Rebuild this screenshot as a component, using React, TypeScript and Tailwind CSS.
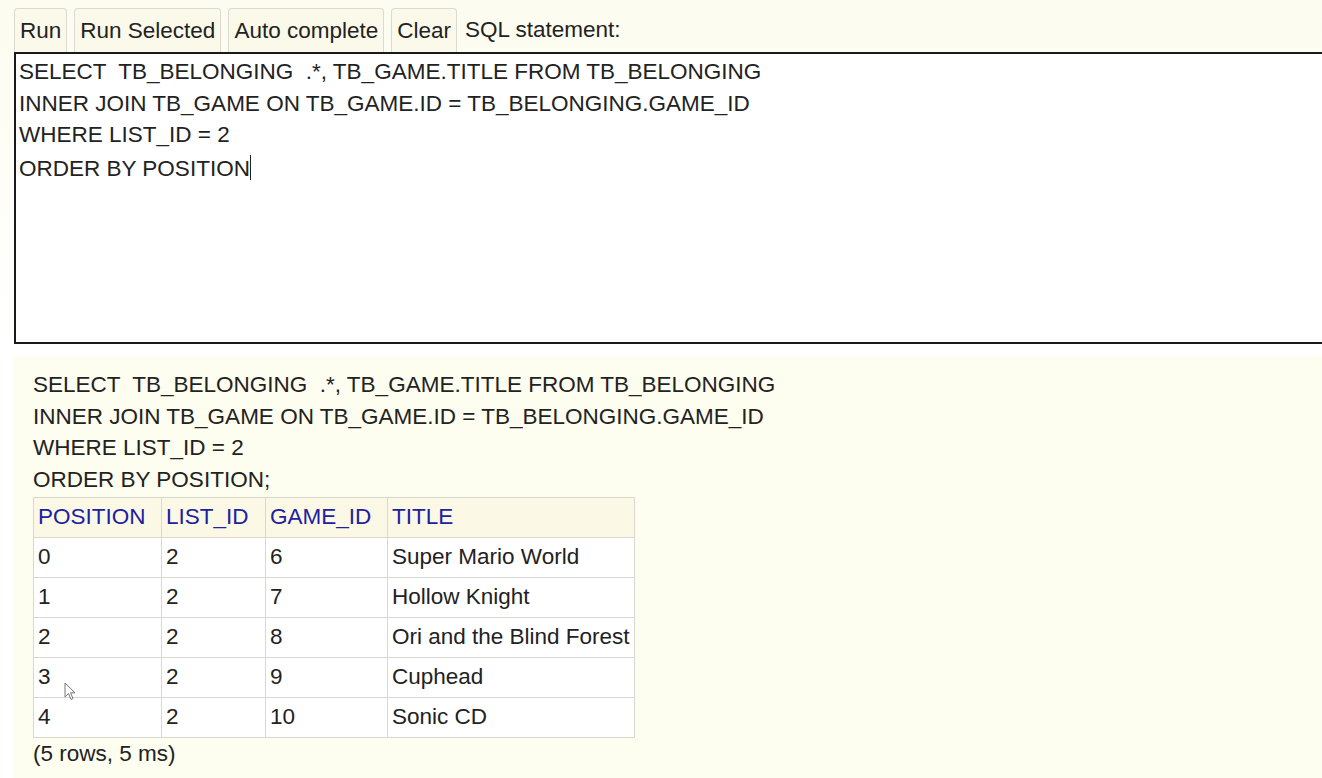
import React from "react";

const sql = [
  "SELECT  TB_BELONGING  .*, TB_GAME.TITLE FROM TB_BELONGING",
  "INNER JOIN TB_GAME ON TB_GAME.ID = TB_BELONGING.GAME_ID",
  "WHERE LIST_ID = 2",
];

const rows = [
  ["0", "2", "6", "Super Mario World"],
  ["1", "2", "7", "Hollow Knight"],
  ["2", "2", "8", "Ori and the Blind Forest"],
  ["3", "2", "9", "Cuphead"],
  ["4", "2", "10", "Sonic CD"],
];

const buttons = ["Run", "Run Selected", "Auto complete", "Clear"];
const colW = ["w-[128px]", "w-[104px]", "w-[122px]", "w-[246px]"];

export default function App() {
  return (
    <div
      className="h-[778px] w-[1322px] overflow-hidden bg-white text-[22.5px] text-[#222]"
      style={{ fontFamily: '"Liberation Sans", Arial, sans-serif' }}
    >
      <div className="bg-gradient-to-b from-[#fdfcf0] to-white pl-[14px] pt-[8px]">
        <div className="flex items-end gap-[7px]">
          {buttons.map((b) => (
            <div
              key={b}
              className="flex h-[44px] items-center rounded-t-[4px] border border-b-0 border-[#dcdad0] bg-[#fbf9ea] px-[5px] pt-[1px] leading-none"
            >
              {b}
            </div>
          ))}
          <div className="ml-px flex h-[44px] items-center pt-[1px] leading-none">SQL statement:</div>
        </div>

        <div className="-mr-4 h-[292px] border-2 border-[#1a1a1a] bg-white px-[3px] pt-[2px] leading-[31.7px] whitespace-pre">
          {sql.map((l) => (
            <div key={l}>{l}</div>
          ))}
          <div>
            ORDER BY POSITION
            <span className="inline-block h-[25px] w-px translate-y-[4px] bg-[#222]"></span>
          </div>
        </div>
      </div>

      <div className="ml-[14px] mt-[12px] h-[430px] bg-[#fdfdf0] pl-[19px] pt-[13px]">
        <div className="leading-[31.7px] whitespace-pre">
          {sql.map((l) => (
            <div key={l}>{l}</div>
          ))}
          <div>ORDER BY POSITION;</div>
        </div>

        <table className="mt-[1px] table-fixed border-collapse">
          <thead>
            <tr className="bg-[#fbf9e6]">
              {["POSITION", "LIST_ID", "GAME_ID", "TITLE"].map((h, j) => (
                <th
                  key={h}
                  className={
                    "h-[40px] border border-[#d8d8d0] px-[4px] text-left font-normal text-[#2020a0] " +
                    colW[j]
                  }
                >
                  {h}
                </th>
              ))}
            </tr>
          </thead>
          <tbody>
            {rows.map((r, i) => (
              <tr key={i} className="bg-white">
                {r.map((c, j) => (
                  <td key={j} className="relative h-[40px] border border-[#d8d8d0] px-[4px] whitespace-nowrap">
                    {c}
                    {i === 3 && j === 0 && (
                      <svg
                        className="absolute left-[30px] top-[24px]"
                        width="14"
                        height="20"
                        viewBox="0 0 14 20"
                      >
                        <path
                          d="M1 1 L1 15 L4.5 11.5 L7 17.5 L9 16.5 L6.5 10.8 L11 10.8 Z"
                          fill="white"
                          stroke="#777"
                          strokeWidth="1"
                        />
                      </svg>
                    )}
                  </td>
                ))}
              </tr>
            ))}
          </tbody>
        </table>

        <div className="mt-[0px] leading-[31px]">(5 rows, 5 ms)</div>
      </div>
    </div>
  );
}
